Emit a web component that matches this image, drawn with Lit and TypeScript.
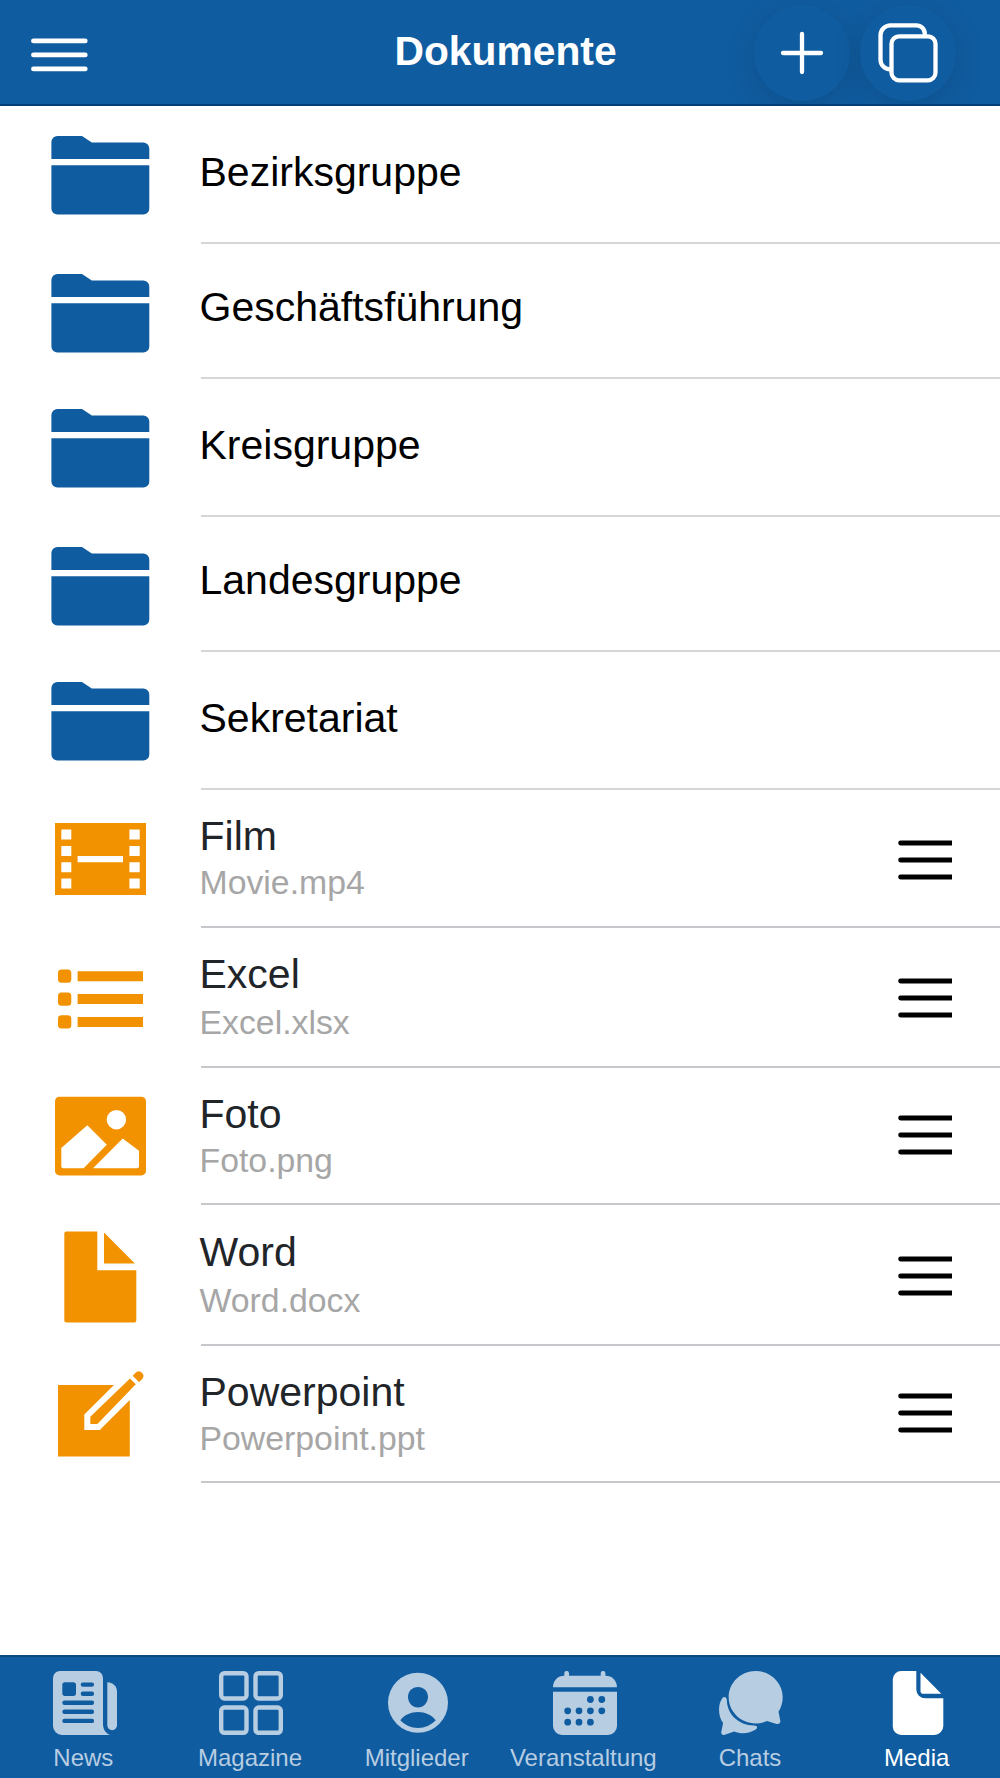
import { css, html, LitElement, svg, SVGTemplateResult } from "lit";
import { customElement, property, state } from "lit/decorators.js";
import { classMap } from "lit/directives/class-map.js";

const rowIcons: Record<string, SVGTemplateResult> = {
  folder: svg`
    <path d="M1.4 34V17a6 6 0 0 1 6-6H32l9.8 6.4h51.5a6 6 0 0 1 6 6V34z"/>
    <path d="M1.4 40.2h97.9v43.3a6 6 0 0 1-6 6H7.4a6 6 0 0 1-6-6z"/>`,
  film: svg`
    <path fill-rule="evenodd" d="M5 14h91v72H5z
      M11.3 20.5v10h10v-10z M11.3 37.1v10h10v-10z M11.3 53.3v10h10v-10z M11.3 69.4v10h10v-10z
      M79.4 20.5v10h10.3v-10z M79.4 37.1v10h10.3v-10z M79.4 53.3v10h10.3v-10z M79.4 69.4v10h10.3v-10z
      M27.6 47v6.2H73V47z"/>`,
  list: svg`
    <rect x="8" y="20.5" width="13.3" height="13.3" rx="3.5"/>
    <rect x="8" y="43.4" width="13.3" height="13.3" rx="3.5"/>
    <rect x="8" y="66.2" width="13.3" height="13.3" rx="3.5"/>
    <path d="M27.6 22.2H93v10H27.6zM27.6 45H93v10H27.6zM27.6 68H93v10H27.6z"/>`,
  photo: svg`
    <path fill-rule="evenodd" d="M9.5 10.8h82a4.5 4.5 0 0 1 4.5 4.5v69.6a4.5 4.5 0 0 1-4.5 4.5h-82A4.5 4.5 0 0 1 5 84.9V15.3a4.5 4.5 0 0 1 4.5-4.5z
      M66.4 24a9.7 9.7 0 1 0 0 19.4a9.7 9.7 0 1 0 0-19.4z
      M11.3 62v18.3a2 2 0 0 0 2 2h20.3l23.2-23.6l-19.5-19.4z
      M43 82.3h44a2 2 0 0 0 2-2V64.7L72.7 52.4z"/>`,
  doc: svg`
    <path d="M16.3 4.5h31v38.8h39v50.2a2 2 0 0 1-2 2h-68a2 2 0 0 1-2-2v-87a2 2 0 0 1 2-2z"/>
    <path d="M54 5.6v31h30.9z"/>`,
  compose: svg`
    <path d="M8 21h56L34.3 50.4V66h15.5l30-29.9v56.3H8z"/>
    <path d="M80 14.4l5.8 5.9L47.4 60h-7.1v-7.3z"/>
    <path d="M82.700 11.800l3.400-3.500a4.600 4.600 0 0 1 6.400 6.400l-3.500 3.400z"/>`,
};

const tabIcons: Record<string, SVGTemplateResult> = {
  news: svg`
    <path fill-rule="evenodd" d="M7 0h36a7 7 0 0 1 7 7v46c0 5 2.5 9 7 11H9a9 9 0 0 1-9-9V7a7 7 0 0 1 7-7z
      M12 11.3a2.700 2.700 0 0 0-2.700 2.700v8.3a2.700 2.700 0 0 0 2.700 2.700h8.3a2.700 2.700 0 0 0 2.700-2.700V14a2.700 2.700 0 0 0-2.700-2.700z
      M29.9 11.4a2.2 2.2 0 0 0 0 4.4h9a2.2 2.2 0 0 0 0-4.4z
      M29.9 20.6a2.2 2.2 0 0 0 0 4.4h9a2.2 2.2 0 0 0 0-4.4z
      M11.5 29.6a2.2 2.2 0 0 0 0 4.4h27.4a2.2 2.2 0 0 0 0-4.4z
      M11.5 38.6a2.2 2.2 0 0 0 0 4.4h27.4a2.2 2.2 0 0 0 0-4.4z
      M11.5 47.7a2.2 2.2 0 0 0 0 4.4h27.4a2.2 2.2 0 0 0 0-4.4z"/>
    <path d="M54.3 11.3c5.4 0 9.7 4 9.7 9.5v33.5a4.85 4.85 0 0 1-9.7 0z"/>`,
  grid: svg`
    <g fill="none" stroke="currentColor" stroke-width="4.4">
      <rect x="2.2" y="2.2" width="25.3" height="25.3" rx="3.2"/>
      <rect x="36.5" y="2.2" width="25.3" height="25.3" rx="3.2"/>
      <rect x="2.2" y="36.5" width="25.3" height="25.3" rx="3.2"/>
      <rect x="36.5" y="36.5" width="25.3" height="25.3" rx="3.2"/>
    </g>`,
  person: svg`
    <path fill-rule="evenodd" d="M32 1.8a30 30 0 1 0 0 60a30 30 0 1 0 0-60z
      M32 16c5.7 0 10 4.3 10 9.7c0 6-4.5 10.800-10 10.800s-10-4.800-10-10.800C22 20.3 26.3 16 32 16z
      M14.3 49.3C18 44 25 41 32 41s14 3 17.7 8.3C45 54.2 39 57 32 57s-13-2.800-17.7-7.7z"/>`,
  calendar: svg`
    <path d="M0 16.2c0-6.7 4.8-11.5 11.3-11.5V2.3a2.35 2.35 0 0 1 4.7 0v2.4h31.7V2.3a2.35 2.35 0 0 1 4.7 0v2.4C59.2 4.7 64 9.5 64 16.2z"/>
    <path fill-rule="evenodd" d="M0 20.7h64V55a9 9 0 0 1-9 9H9a9 9 0 0 1-9-9z
      ${[[37.4, 28.5], [48.8, 28.5], [14.7, 39.8], [26, 39.8], [37.4, 39.8], [48.8, 39.8], [14.7, 51.2], [26, 51.2], [37.4, 51.2]]
        .map(([x, y]) => `M${x} ${y - 3.4}a3.4 3.4 0 1 0 0 6.8a3.4 3.4 0 1 0 0-6.8z`)
        .join(' ')}"/>`,
  chat: svg`
    <path d="M36.7 0c15 0 27 11.7 27 26.3c0 5.3-1.5 10.2-4.2 14.4l1.8 9c.4 2.3-1.3 3.9-3.6 3.2L48 50a27.5 27.5 0 0 1-11.3 2.4c-15 0-27-11.7-27-26.1S21.700 0 36.7 0z"/>
    <path d="M7.9 29.5c.2 13.5 11.6 25 27.2 24.9c3.2 0 4 2.5 1.6 4.2c-6 3.8-14 5-21.5 1.9l-9.4 3.3c-2.3.7-3.9-.7-3.5-3l1.8-8.9C-.8 45.5-1.5 34 3.3 27.2c1.9-2.5 4.5-1.2 4.6 2.3z"/>`,
  doc: svg`
    <path d="M15.3 0h15v18.3a9 9 0 0 0 9 9h18V55a9 9 0 0 1-9 9h-33a8.5 8.5 0 0 1-8.5-8.5v-47A8.5 8.5 0 0 1 15.3 0z"/>
    <path d="M34.5 1.8l20.8 20.9h-18a2.8 2.8 0 0 1-2.8-2.8z"/>`,
};

interface Folder {
  name: string;
}

interface DocFile {
  name: string;
  file: string;
  icon: string;
}

const folders: Folder[] = [
  { name: 'Bezirksgruppe' },
  { name: 'Geschäftsführung' },
  { name: 'Kreisgruppe' },
  { name: 'Landesgruppe' },
  { name: 'Sekretariat' },
];

const files: DocFile[] = [
  { name: 'Film', file: 'Movie.mp4', icon: 'film' },
  { name: 'Excel', file: 'Excel.xlsx', icon: 'list' },
  { name: 'Foto', file: 'Foto.png', icon: 'photo' },
  { name: 'Word', file: 'Word.docx', icon: 'doc' },
  { name: 'Powerpoint', file: 'Powerpoint.ppt', icon: 'compose' },
];

const tabs = [
  { label: 'News', icon: 'news' },
  { label: 'Magazine', icon: 'grid' },
  { label: 'Mitglieder', icon: 'person' },
  { label: 'Veranstaltung', icon: 'calendar' },
  { label: 'Chats', icon: 'chat' },
  { label: 'Media', icon: 'doc' },
];

@customElement('doc-navbar')
export class DocNavbar extends LitElement {
  @property()
  heading = '';

  render() {
    return html`
      <header class="bar">
        <svg class="menu" viewBox="0 0 57 34">
          <path d="M2.5 2.9h51.7M2.5 16.9h51.7M2.5 30.9h51.7"/>
        </svg>
        <div class="title">${this.heading}</div>
        <div class="actions">
          <div class="round">
            <svg viewBox="0 0 96 96"><path d="M48 29v38M29 48h38"/></svg>
          </div>
          <div class="round">
            <svg viewBox="0 0 96 96">
              <path d="M30 64.3a9.5 9.5 0 0 1-9.5-9.5V30.3a10 10 0 0 1 10-10h25.8a8.5 8.5 0 0 1 8.5 8.7"/>
              <rect x="31.5" y="31.3" width="44" height="44" rx="7.5"/>
            </svg>
          </div>
        </div>
      </header>
    `
  }

  static styles = css`
    :host {
      display: block;
    }

    .bar {
      box-sizing: border-box;
      height: 106px;
      display: grid;
      grid-template-columns: 271px 1fr 247px;
      align-items: center;
      padding: 2px 44px 0 31px;
      overflow: hidden;
      color: #fff;
      background-color: #105ca0;
      border-bottom: 2px solid #063e78;
    }

    svg {
      display: block;
      fill: none;
      stroke: currentColor;
      stroke-width: 4.3;
      stroke-linecap: round;
    }

    .menu {
      width: 57px;
      height: 34px;
      margin-top: 3px;
      stroke-width: 4.9;
    }

    .title {
      font-size: 40.8px;
      font-weight: bold;
      line-height: 48px;
      text-align: center;
      margin-bottom: 5px;
    }

    .actions {
      display: flex;
      justify-content: flex-end;
      gap: 10px;
    }

    .round {
      width: 96px;
      height: 96px;
      border-radius: 50%;
      background-color: #105ca0;
      box-shadow: 0 8px 32px rgba(0, 0, 0, 0.12);
    }
  `
}

@customElement('doc-row')
export class DocRow extends LitElement {
  @property()
  name = '';

  @property()
  file = '';

  @property()
  icon = 'folder';

  render() {
    return html`
      <div class=${classMap({ row: true, file: !!this.file })}>
        <svg class="icon" viewBox="0 0 100 100">${rowIcons[this.icon]}</svg>
        <div class="inner">
          <div class="text">
            <div class="name">${this.name}</div>
            ${this.file ? html`<div class="sub">${this.file}</div>` : ''}
          </div>
          ${this.file
            ? html`<svg class="handle" viewBox="0 0 54 40"><path d="M2.6 3h54M2.6 20h54M2.6 37h54"/></svg>`
            : ''}
        </div>
      </div>
    `
  }

  static styles = css`
    :host {
      display: block;
    }

    .row {
      display: flex;
      align-items: flex-start;
      height: 100%;
      padding-left: 50px;
      box-sizing: border-box;
    }

    .icon {
      width: 100px;
      height: 100px;
      flex: none;
      margin-top: var(--icon-top, 19px);
      fill: #105ca0;
    }

    .inner {
      flex: 1;
      align-self: stretch;
      box-sizing: border-box;
      display: flex;
      align-items: center;
      justify-content: space-between;
      margin-left: 51px;
      padding-right: 48px;
      border-bottom: 2px solid #d6d6d6;
    }

    .text {
      margin-left: -1.5px;
      padding-bottom: var(--name-shift, 4px);
    }

    .name {
      color: #000;
      font-size: 41px;
      line-height: 48px;
    }

    .file .icon {
      fill: #f39200;
    }

    .file .inner {
      border-color: #c8c7cc;
    }

    .file .text {
      align-self: flex-start;
      padding: var(--name-top, 22px) 0 0;
    }

    .file .name {
      color: #212529;
    }

    .sub {
      color: #a6a6a6;
      font-size: 33.8px;
      line-height: 40px;
      padding-top: var(--sub-gap, 2px);
    }

    .handle {
      width: 54px;
      height: 40px;
      align-self: flex-start;
      margin-top: var(--handle-top, 50px);
      fill: none;
      stroke: #000;
      stroke-width: 4.8;
      stroke-linecap: round;
    }
  `
}

@customElement('doc-tabbar')
export class DocTabbar extends LitElement {
  @state()
  active = 'Media';

  render() {
    return html`
      <nav class="tabs">
        ${tabs.map(tab => html`
          <div
            class=${classMap({ tab: true, active: tab.label === this.active })}
            @click=${() => this.active = tab.label}
          >
            <svg viewBox="0 0 64 64">${tabIcons[tab.icon]}</svg>
            <span>${tab.label}</span>
          </div>
        `)}
      </nav>
    `
  }

  static styles = css`
    :host {
      display: block;
    }

    .tabs {
      box-sizing: border-box;
      height: 123px;
      display: grid;
      grid-template-columns: repeat(6, 1fr);
      background-color: #105ca0;
      border-top: 2px solid #084a7c;
    }

    .tab {
      display: flex;
      flex-direction: column;
      align-items: center;
      gap: 9px;
      padding-top: 14px;
      color: #b7cde2;
    }

    .active {
      color: #fff;
    }

    svg {
      width: 64px;
      height: 64px;
      margin-left: 2.4px;
      fill: currentColor;
    }

    span {
      font-size: 24px;
      line-height: 28px;
    }
  `
}

@customElement('app-root')
export class AppRoot extends LitElement {
  render() {
    return html`
      <doc-navbar heading="Dokumente"></doc-navbar>
      <main class="list">
        ${folders.map(f => html`<doc-row .name=${f.name}></doc-row>`)}
        ${files.map(f => html`<doc-row .name=${f.name} .file=${f.file} .icon=${f.icon}></doc-row>`)}
      </main>
      <doc-tabbar></doc-tabbar>
    `
  }

  static styles = css`
    :host {
      display: flex;
      flex-direction: column;
      height: 1778px;
      overflow: hidden;
      background-color: #fff;
      font-family: "Liberation Sans", Arial, sans-serif;
    }

    .list {
      flex: 1;
      display: grid;
      grid-template-rows: 138px 135px 138px 135px 138px 138px 140px 137px 141px 137px;
      align-content: start;
    }

    doc-row:nth-child(even) {
      --name-shift: 7px;
    }

    doc-row:nth-child(2),
    doc-row:nth-child(4) {
      --icon-top: 18.6px;
    }

    doc-row:nth-child(7) {
      --icon-top: 21px;
      --sub-gap: 4px;
      --handle-top: 49.6px;
    }

    doc-row:nth-child(8) {
      --icon-top: 18.4px;
      --handle-top: 47.3px;
    }

    doc-row:nth-child(9) {
      --icon-top: 21.5px;
      --name-top: 23px;
      --sub-gap: 4px;
      --handle-top: 50.5px;
    }

    doc-row:nth-child(10) {
      --icon-top: 18px;
      --handle-top: 47.3px;
    }
  `
}
